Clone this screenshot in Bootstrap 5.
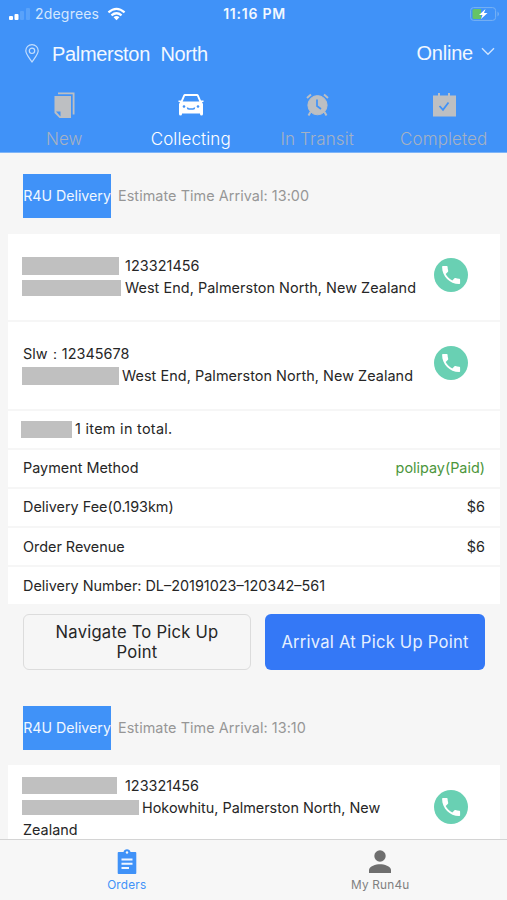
<!DOCTYPE html>
<html lang="en">
<head>
<meta charset="utf-8">
<meta name="viewport" content="width=device-width, initial-scale=1">
<title>Orders</title>
<link href="https://cdn.jsdelivr.net/npm/bootstrap@5.3.0/dist/css/bootstrap.min.css" rel="stylesheet">
<style>
body{font-family:Inter,"Liberation Sans",sans-serif;background:#f6f6f6;color:#262626;font-size:14.4px;line-height:22px}
svg{display:block;flex:none}
.screen{height:900px;overflow:hidden}
.top-area{background:#4092f8;height:153px;border-bottom:1px solid #7fb5f8;color:#f2f8ff}
.status{height:28px;padding:0 7px 0 9px;display:grid;grid-template-columns:1fr auto 1fr}
.carrier{font-size:14px;letter-spacing:.2px;color:#d5e7fe}
.clock{font-size:14px;font-weight:600;letter-spacing:.75px}
.place{height:50px;padding:0 12px 0 25px;font-family:"Liberation Sans",sans-serif}
.place-name{font-size:20px;white-space:pre;letter-spacing:-.32px;padding-left:5px;padding-top:2px}
.online{font-size:20px;letter-spacing:-.2px;margin-top:-1px}
.tabs-row{padding-top:13px;padding-left:1px}
.tab-item{width:126.5px;font-size:17px;color:#a5b1c3;font-weight:300}
.tab-item.on{color:#fff}
.tab-item span{line-height:22px;margin-top:9px;letter-spacing:.1px}
.sec-head{height:44px;margin-left:23px}
.first-head{margin-top:21px}
.second-head{margin-top:36px}
.brand-tag{width:88px;background:#4092f8;color:#f0f7ff;white-space:nowrap;font-size:14.2px}
.eta{color:#969696;margin-left:7px;font-size:14.4px;letter-spacing:.06px}
.panel{margin:16px 7px 0 8px;background:#fff}
.second-head+.panel{margin-top:15px}
.panel>div{padding:0 15px;border-bottom:2px solid #f6f6f6}
.panel>div:last-child{border:0}
.stop{height:88.500px}
.stop:first-child{height:88px}
.stop .info{letter-spacing:.06px}
.stop.tall .info{margin-bottom:2px;letter-spacing:0}
.line-row{height:39.200px}
.panel>.line-row:last-child{height:36.700px}
.redact{background:#c0c0c0;display:inline-block;flex:none;margin-left:-1px}
.call{margin-right:17px;margin-bottom:4px}
.paid{color:#4c963c}
.acts{margin:10px 22px 0 23px}
.act{height:56px;border-radius:6px;font-size:16.6px;line-height:20px;padding:0;letter-spacing:.23px}
.nav-to{width:228px;border:1px solid #dcdcdc;color:#262626;padding:0 20px}
.arrive{width:220px;background:#3478f6;color:#e6f0ff}
.bottom-bar{height:61.500px;background:#f7f7f7;border-top:1.500px solid #d4d4d4;font-size:11.8px;letter-spacing:.2px;line-height:14px;color:#808080}
.bottom-bar .on{color:#4092f8}
.bottom-bar span{margin-top:3px}
</style>
<script src="https://cdn.jsdelivr.net/npm/bootstrap@5.3.0/dist/js/bootstrap.bundle.min.js"></script>
</head>
<body>
<svg width="0" height="0" class="d-none"><defs>
<symbol id="phone" viewBox="0 0 34 34"><circle cx="17" cy="17" r="17" fill="#69d0b3"/><path transform="translate(5.1 5.1)" fill="#fff" d="M6.6 10.8c1.4 2.8 3.8 5.1 6.6 6.6l2.2-2.2c.3-.3.7-.4 1-.2 1.1.4 2.3.6 3.6.6.6 0 1 .4 1 1V20c0 .6-.4 1-1 1C10.600 21 3 13.400 3 4c0-.6.4-1 1-1h3.500c.6 0 1 .4 1 1 0 1.200.2 2.400.6 3.600.1.300 0 .7-.2 1z"/></symbol>
</defs></svg>
<div class="screen d-flex flex-column">
<header class="top-area flex-shrink-0">
  <div class="status align-items-center">
    <div class="d-flex align-items-center carrier">
      <svg width="22" height="14" viewBox="0 0 22 14"><g fill="#fff"><rect y="9" width="4" height="4" rx="1"/><rect x="5.500" y="7" width="4" height="6" rx="1"/></g><g fill="#59a2fa"><rect x="11" y="4" width="4" height="9" rx="1"/><rect x="17" y="1" width="4" height="12" rx="1"/></g></svg>
      <span class="ms-1">2degrees</span>
      <svg class="ms-2" width="19" height="14" viewBox="0 0 20 14" fill="none" stroke="#fff" stroke-width="2.300"><path d="M1.500 5.300Q10-2.300 18.500 5.300M4.700 8.500Q10 3.900 15.300 8.500"/><path d="M10 13.500L6.900 10.400Q10 8 13.100 10.400Z" fill="#fff" stroke="none"/></svg>
    </div>
    <span class="clock">11:16 PM</span>
    <svg class="ms-auto" width="30" height="14" viewBox="0 0 30 14"><rect x=".6" y=".6" width="25" height="12.800" rx="3" fill="none" stroke="#79b2f3"/><path d="M27.500 4.500q3 2.500 0 5z" fill="#79b2f3"/><path d="M4 2h7v10H4q-1.500 0-1.500-1.500v-7Q2.500 2 4 2z" fill="#65c466"/><path d="M15.500 2L9 8h3.500L11 12l6.500-6H14z" fill="#fff"/></svg>
  </div>
  <div class="place d-flex align-items-center">
    <svg width="14" height="19" viewBox="0 0 14 19" fill="none" stroke="#c4defd" stroke-width="1.200"><path d="M7 18C3.500 13 .8 10 .8 6.800a6.200 6.200 0 0 1 12.400 0C13.200 10 10.500 13 7 18z"/><circle cx="7" cy="6.800" r="2.700"/></svg>
    <span class="place-name ms-2">Palmerston  North</span>
    <span class="online ms-auto">Online</span>
    <svg class="ms-2 mb-1" width="14" height="9" viewBox="0 0 14 9" fill="none" stroke="#cfe4fe" stroke-width="1.400"><path d="M1 1.200l6 6 6-6"/></svg>
  </div>
  <nav class="tabs-row d-flex text-center">
    <div class="tab-item d-flex flex-column align-items-center">
      <svg width="26" height="28" viewBox="0 0 26 28" fill="#bdbfc2"><path d="M7 1.500h16.500v22h-1.800V3.300H7z"/><path d="M3.500 5H20v22H8.500l-5-5V5z"/><path d="M5 20.500h4.500v5z" fill="#4092f8"/></svg><span>New</span></div>
    <div class="tab-item on d-flex flex-column align-items-center">
      <svg width="26" height="28" viewBox="0 0 26 28"><path fill="#fff" d="M7 3h12q1.200 0 1.600 1L23 9.500h2.500v1.600H24l1 2V23q0 1.500-1.500 1.500T22 23v-.5H4v.5q0 1.500-1.500 1.500T1 23v-9.900l1-2H.5V9.500H3L5.400 4Q5.800 3 7 3z"/><g fill="#4092f8"><path d="M7 4.900L4.700 10.500h16.600L19 4.900z"/><circle cx="6" cy="15.500" r="1.300"/><circle cx="20" cy="15.500" r="1.300"/></g><path d="M9.500 16.500q0 1.500 1.500 1.500h4q1.500 0 1.500-1.500" fill="none" stroke="#4092f8" stroke-width="1.500"/></svg><span>Collecting</span></div>
    <div class="tab-item d-flex flex-column align-items-center">
      <svg width="26" height="28" viewBox="0 0 26 28" fill="#bdbfc2" stroke="#bdbfc2"><circle cx="13.500" cy="14.200" r="9.600"/><path d="M3 7l4-3.500M24 7l-4-3.500M6.500 21l-2 3.500M20.500 21l2 3.500" stroke-width="2" fill="none"/><path d="M13 8.500v6.500l4 3" fill="none" stroke="#4092f8" stroke-width="1.700"/></svg><span>In Transit</span></div>
    <div class="tab-item d-flex flex-column align-items-center">
      <svg width="26" height="28" viewBox="0 0 26 28"><path fill="#bdbfc2" d="M2 4.500h5V2h2v2.500h8V2h2v2.500h6v21H2z"/><path d="M8.500 15l3.500 3.800 5.500-7.300" fill="none" stroke="#4092f8" stroke-width="1.800"/></svg><span>Completed</span></div>
  </nav>
</header>
<main class="flex-grow-1 overflow-hidden">
  <div class="sec-head first-head d-flex">
    <div class="brand-tag d-flex align-items-center justify-content-center"><span>R4U Delivery</span></div><span class="eta align-self-center">Estimate Time Arrival: 13:00</span>
  </div>
  <section class="panel">
    <div class="stop d-flex align-items-center justify-content-between">
      <div class="info">
        <div class="d-flex align-items-center"><i class="redact" style="width:97px;height:18px;margin-right:6px"></i><span>123321456</span></div>
        <div class="d-flex align-items-center"><i class="redact" style="width:99px;height:16px;margin-right:4px"></i><span>West End, Palmerston North, New Zealand</span></div>
      </div>
      <svg class="call" width="34" height="34"><use href="#phone"/></svg>
    </div>
    <div class="stop d-flex align-items-center justify-content-between">
      <div class="info">
        <div>Slw：12345678</div>
        <div class="d-flex align-items-center"><i class="redact" style="width:97px;height:18px;margin-right:3px"></i><span>West End, Palmerston North, New Zealand</span></div>
      </div>
      <svg class="call" width="34" height="34"><use href="#phone"/></svg>
    </div>
    <div class="line-row d-flex align-items-center"><i class="redact" style="width:51px;height:17px;margin-left:-2px;margin-right:3px"></i><span style="letter-spacing:.3px">1 item in total.</span></div>
    <div class="line-row d-flex align-items-center justify-content-between"><span>Payment Method</span><span class="paid">polipay(Paid)</span></div>
    <div class="line-row d-flex align-items-center justify-content-between"><span>Delivery Fee(0.193km)</span><span>$6</span></div>
    <div class="line-row d-flex align-items-center justify-content-between"><span>Order Revenue</span><span>$6</span></div>
    <div class="line-row d-flex align-items-center"><span>Delivery Number: DL–20191023–120342–561</span></div>
  </section>
  <div class="acts d-flex justify-content-between">
    <button class="btn act nav-to">Navigate To Pick Up Point</button>
    <button class="btn act arrive">Arrival At Pick Up Point</button>
  </div>
  <div class="sec-head second-head d-flex">
    <div class="brand-tag d-flex align-items-center justify-content-center"><span>R4U Delivery</span></div><span class="eta align-self-center">Estimate Time Arrival: 13:10</span>
  </div>
  <section class="panel">
    <div class="stop tall d-flex align-items-center justify-content-between">
      <div class="info">
        <div class="d-flex align-items-center"><i class="redact" style="width:95px;height:17px;margin-right:8px"></i><span>123321456</span></div>
        <div class="d-flex align-items-center"><i class="redact" style="width:117px;height:15px;margin-right:3px"></i><span>Hokowhitu, Palmerston North, New</span></div>
        <div>Zealand</div>
      </div>
      <svg class="call" width="34" height="34"><use href="#phone"/></svg>
    </div>
  </section>
</main>
<footer class="bottom-bar d-flex flex-shrink-0 text-center">
  <div class="w-50 on d-flex flex-column align-items-center pt-2">
    <svg width="20" height="27" viewBox="0 0 20 27"><path fill="#4092f8" d="M1.500 4h5a3.600 3.600 0 0 1 7 0h5q.8 0 .8 1v20q0 1-.8 1h-17q-.8 0-.8-1V5q0-1 .8-1z"/><circle cx="10" cy="4.500" r="1.200" fill="#f7f7f7"/><path d="M4.500 11.500h11M4.500 15.800h11M4.500 20h7.500" stroke="#f0f6ff" stroke-width="2"/></svg><span>Orders</span></div>
  <div class="w-50 d-flex flex-column align-items-center pt-2">
    <svg width="24" height="27" viewBox="0 0 24 27" fill="#6e6e6e"><circle cx="12" cy="8" r="5.700"/><path d="M1 25v-3c0-4 7-5.800 11-5.800S23 18 23 22v3z"/></svg><span>My Run4u</span></div>
</footer>
</div>
</body>
</html>
